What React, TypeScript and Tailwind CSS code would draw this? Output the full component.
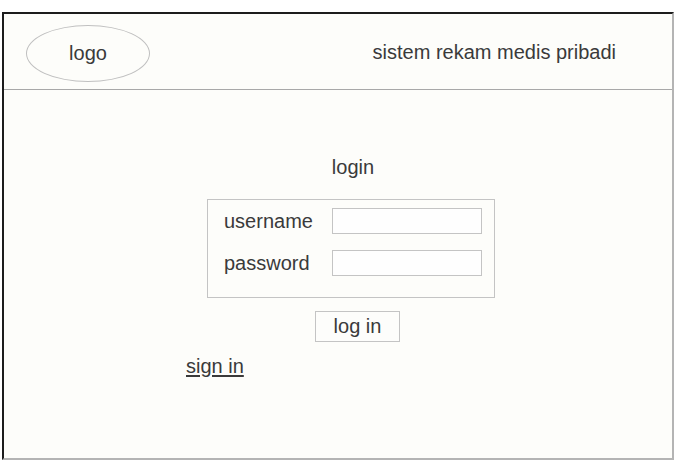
export default function App() {
    return <div className="w-[679px] h-[470px] bg-white pt-[12px] pl-[2px] font-['Liberation_Sans',Arial,sans-serif] text-[#3a3a3a] text-[20px]">
        <div className="w-[672px] h-[448px] bg-[#fdfdfa] border-2 border-t-[#1c1c1c] border-l-[#1c1c1c] border-r-[#b4b4b4] border-b-[#b4b4b4]">
            {/* header */}
            <div className="h-[76px] border-b border-[#a8a8a8] flex items-center justify-between pl-[22px] pr-[56px]">
                <div className="w-[124px] h-[57px] mt-1 rounded-[50%] border border-[#c0c0c0] flex items-center justify-center leading-[23px]">logo</div>
                <div className="leading-[23px] mt-[2px]">sistem rekam medis pribadi</div>
            </div>

            {/* login form */}
            <div className="pt-[66px] pl-[182px]">
                <div className="ml-[21px] w-[288px] flex flex-col">
                    <div className="text-center pl-[4px] leading-[23px]">login</div>
                    <div className="mt-[20px] h-[99px] border border-[#c4c4c4] pt-[8px] pl-[16px] pr-[12px] flex flex-col gap-[16px]">
                        <div className="flex items-center">
                            <label className="w-[108px] leading-[23px]">username</label>
                            <input className="w-[150px] h-[26px] border border-[#c4c4c4] bg-[#fefefe] outline-none px-1 text-[15px]" />
                        </div>
                        <div className="flex items-center">
                            <label className="w-[108px] leading-[23px]">password</label>
                            <input type="password" className="w-[150px] h-[26px] border border-[#c4c4c4] bg-[#fefefe] outline-none px-1 text-[15px]" />
                        </div>
                    </div>
                    <button className="mt-[13px] ml-[108px] w-[85px] h-[31px] border border-[#c4c4c4] bg-[#fdfdfb] leading-[23px] flex items-center justify-center">log in</button>
                </div>
                <a href="#" className="inline-block mt-[13px] leading-[23px] underline underline-offset-2">sign in</a>
            </div>
        </div>
    </div>
}
